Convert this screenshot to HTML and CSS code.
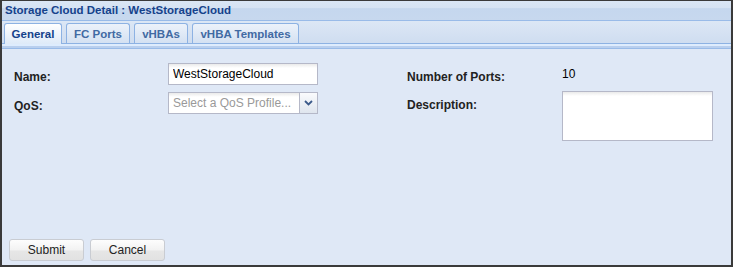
FILE: index.html
```html
<!DOCTYPE html>
<html>
<head>
<meta charset="utf-8">
<link rel="stylesheet" href="styles.css">
</head>
<body>
<div class="window">
  <div class="header">Storage Cloud Detail : WestStorageCloud</div>
  <div class="tabstrip">
    <div class="tab active t-general">General</div>
    <div class="tab t-fc">FC Ports</div>
    <div class="tab t-vhba">vHBAs</div>
    <div class="tab t-tmpl">vHBA Templates</div>
  </div>
  <div class="spacer"></div>
  <div class="body">
    <div class="col left">
      <div class="row">
        <label class="label">Name:</label>
        <input class="text" type="text" value="WestStorageCloud">
      </div>
      <div class="row">
        <label class="label">QoS:</label>
        <div class="combo">
          <span class="placeholder">Select a QoS Profile...</span>
          <span class="trigger"><svg width="9" height="6" viewBox="0 0 9 6"><path d="M1 1 L4.5 4.5 L8 1" fill="none" stroke="#3c5a8a" stroke-width="1.8"/></svg></span>
        </div>
      </div>
    </div>
    <div class="col right">
      <div class="row">
        <label class="label">Number of Ports:</label>
        <div class="value">10</div>
      </div>
      <div class="row">
        <label class="label">Description:</label>
        <div class="textarea"></div>
      </div>
    </div>
  </div>
  <div class="footer">
    <button class="btn">Submit</button>
    <button class="btn">Cancel</button>
  </div>
</div>
</body>
</html>
```
FILE: styles.css
```css
html, body { margin: 0; padding: 0; }
body { font-family: "Liberation Sans", Arial, sans-serif; font-size: 12px; }
.window {
  width: 733px; height: 267px; box-sizing: border-box;
  border: 1px solid #3a3a3a; border-left-width: 2px; border-right-width: 2px; border-bottom-width: 2px;
  background: #dfe8f6; display: flex; flex-direction: column;
}
.header {
  height: 20px; box-sizing: border-box; padding-left: 3px;
  background: linear-gradient(#dae6f5 0, #d6e3f3 35%, #c5d7ee 40%, #c7d8ee 100%);
  border-bottom: 1px solid #99bbe8;
  color: #15428b; font-weight: bold; font-size: 11.5px; line-height: 19px;
}
.tabstrip {
  height: 23px; box-sizing: border-box; display: flex; align-items: flex-end; gap: 4px;
  padding-left: 2px;
  background: linear-gradient(#dce7f5, #cfddf0);
  border-bottom: 1px solid #8db2e3;
}
.tab {
  height: 20px; box-sizing: border-box; text-align: center;
  border: 1px solid #8db2e3; border-bottom: none; border-radius: 3px 3px 0 0;
  background: linear-gradient(#ecf2fa, #d4e1f2);
  color: #416aa3; font-weight: bold; font-size: 11.5px; line-height: 20px;
}
.t-general { width: 58px; }
.t-fc { width: 64px; }
.t-vhba { width: 54px; }
.t-tmpl { width: 107px; }
.tab.active {
  height: 21px; margin-bottom: -1px; color: #15428b;
  background: linear-gradient(#ffffff, #deeaf8);
}
.spacer {
  height: 5px; box-sizing: border-box;
  background: linear-gradient(#deecfd 0, #deecfd 40%, #b9cfee 40%, #b9cfee 100%);
  border-bottom: 1px solid #99bbe8;
}
.body { flex: 1; display: flex; padding: 14px 0 0 12px; }
.col { display: flex; flex-direction: column; gap: 7px; }
.left { width: 393px; }
.row { display: flex; align-items: flex-start; }
.label { font-weight: bold; color: #222; width: 154px; flex: none; font-size: 12px; padding-top: 7px; line-height: 14px; }
.right .label { width: 155px; }
.text {
  width: 150px; height: 22px; box-sizing: border-box; margin: 0;
  border: 1px solid #b5b8c8; background: #fff;
  background-image: linear-gradient(#eaeaea, #fff 4px);
  font-family: "Liberation Sans", Arial, sans-serif; font-size: 12px; color: #000;
  padding: 0 4px; outline: none;
}
.combo {
  width: 150px; height: 22px; box-sizing: border-box; display: flex;
  border: 1px solid #b5b8c8; background: #fff;
  background-image: linear-gradient(#eaeaea, #fff 4px);
}
.placeholder { flex: 1; color: #999; padding-left: 4px; line-height: 20px; font-size: 12px; white-space: nowrap; overflow: hidden; }
.trigger {
  width: 17px; flex: none; border-left: 1px solid #b5b8c8;
  background: linear-gradient(#fafbfd, #dfe5ee);
  display: flex; align-items: center; justify-content: center;
}
.value { color: #000; padding-top: 4px; line-height: 14px; }
.textarea {
  width: 151px; height: 50px; box-sizing: border-box;
  border: 1px solid #b5b8c8; background: #fff;
  background-image: linear-gradient(#eaeaea, #fff 4px);
}
.footer { display: flex; gap: 6px; padding: 0 0 4px 7px; }
.btn {
  width: 75px; height: 22px; box-sizing: border-box; margin: 0;
  border: 1px solid #c9ccd2; border-radius: 3px;
  background: linear-gradient(#fdfdfd, #f2f2f2 50%, #e6e6e6 55%, #e2e2e2);
  font-family: "Liberation Sans", Arial, sans-serif; font-size: 12px; color: #222;
}
```
